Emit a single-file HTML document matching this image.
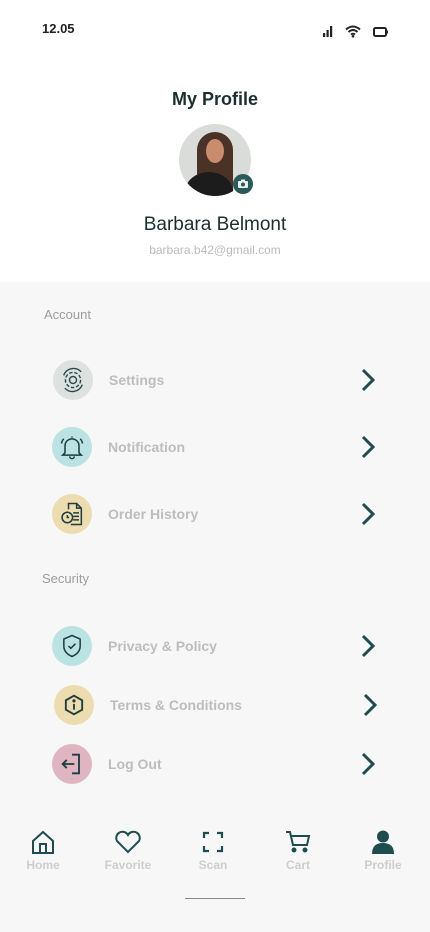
<!DOCTYPE html>
<html><head><style>
body{margin:0;width:430px;height:932px;position:relative;background:#f7f7f7;font-family:"Liberation Sans",sans-serif;overflow:hidden}
.top{position:absolute;left:0;top:0;width:430px;height:282px;background:#fff}
.a{position:absolute}
.lbl{position:absolute;font-size:13px;color:#9c9c9c}
.row{position:absolute;left:0;width:430px;height:40px}
.ic{position:absolute;width:40px;height:40px;border-radius:50%;top:0}
.ic svg{position:absolute;left:6px;top:6px}
.t{position:absolute;top:12px;font-size:14px;font-weight:bold;color:#bdbdbd}
.ch{position:absolute;top:8px}
.nav{position:absolute;top:830px;width:80px;text-align:center;font-size:12px;font-weight:bold;color:#cdcdcd}
.nav svg{display:block;margin:0 auto 4px}
</style></head><body>
<div class="top"></div>
<div class="a" style="left:42px;top:21px;font-size:13px;font-weight:bold;color:#222">12.05</div>
<svg class="a" style="left:322px;top:24px" width="66" height="16">
<rect x="1" y="9" width="2.2" height="4" fill="#222"/><rect x="4.5" y="6" width="2.2" height="7" fill="#222"/><rect x="8" y="2" width="2.2" height="11" fill="#222"/>
<path d="M24 5.5 Q31 -0.5 38 5.5 M26.5 8 Q31 4 35.5 8 M29 10.5 Q31 9 33 10.5" stroke="#222" stroke-width="2" fill="none"/><circle cx="31" cy="12.3" r="1.3" fill="#222"/>
<rect x="52" y="4" width="12" height="8" rx="1.5" stroke="#222" stroke-width="2" fill="none"/><rect x="64.5" y="6.5" width="1.8" height="3" fill="#222"/>
</svg>
<div class="a" style="left:0;width:430px;top:89px;text-align:center;font-size:18px;font-weight:bold;color:#1c2e2e">My Profile</div>
<div class="a" style="left:179px;top:124px;width:72px;height:72px;border-radius:50%;background:#d9dcd8;overflow:hidden">
<div class="a" style="left:18px;top:8px;width:36px;height:64px;border-radius:18px 18px 0 0;background:#4a3226"></div>
<div class="a" style="left:27px;top:15px;width:18px;height:24px;border-radius:50%;background:#c98d6e"></div>
<div class="a" style="left:6px;top:48px;width:48px;height:40px;border-radius:50% 50% 0 0;background:#1c1c1c"></div>
</div>
<div class="a" style="left:233px;top:174px;width:20px;height:20px;border-radius:50%;background:#2b5a5a"></div>
<svg class="a" style="left:237px;top:178px" width="12" height="12"><rect x="1" y="3" width="10" height="7" rx="1" fill="#e6eeee"/><rect x="4" y="1.5" width="4" height="2" fill="#e6eeee"/><circle cx="6" cy="6.5" r="2" fill="#2b5a5a"/></svg>
<div class="a" style="left:0;width:430px;top:214px;text-align:center;font-size:19px;color:#1c2e2e">Barbara Belmont</div>
<div class="a" style="left:0;width:430px;top:243px;text-align:center;font-size:12px;color:#bbb">barbara.b42@gmail.com</div>

<div class="lbl" style="left:44px;top:307px">Account</div>
<div class="lbl" style="left:42px;top:571px">Security</div>

<div class="row" style="top:360px"><div class="ic" style="left:53px;background:#dde1e0"><svg width="28" height="28" viewBox="0 0 24 24" fill="none" stroke="#2a4a4a" stroke-width="1.2"><circle cx="12" cy="12" r="3"/><circle cx="12" cy="12" r="6.5" stroke-dasharray="3 1.5"/><path d="M4 8 A9 9 0 0 1 19 5 M20 16 A9 9 0 0 1 5 19"/></svg></div><div class="t" style="left:109px">Settings</div>
<svg class="ch" style="left:360px" width="16" height="24"><path d="M3 2 L13 12 L3 22" stroke="#1f4d4f" stroke-width="3" fill="none"/></svg></div>

<div class="row" style="top:427px"><div class="ic" style="left:52px;background:#bce3e4"><svg width="28" height="28" viewBox="0 0 24 24" fill="none" stroke="#1f3d3d" stroke-width="1.3"><path d="M12 3 V4 M6 17 V11 A6 6 0 0 1 18 11 V17 L20 19 H4 Z M10 20 A2 2 0 0 0 14 20 M3 9 Q3.5 6 5 5 M21 9 Q20.5 6 19 5"/></svg></div><div class="t" style="left:108px">Notification</div>
<svg class="ch" style="left:360px" width="16" height="24"><path d="M3 2 L13 12 L3 22" stroke="#1f4d4f" stroke-width="3" fill="none"/></svg></div>

<div class="row" style="top:494px"><div class="ic" style="left:52px;background:#ecdcb0"><svg width="28" height="28" viewBox="0 0 24 24" fill="none" stroke="#1f3d3d" stroke-width="1.3"><path d="M9 8 V3 H16 L20 7 V21 H11 M16 3 V7 H20 M13 11 H18 M13 14 H18 M13 17 H18"/><circle cx="8" cy="15" r="4.5"/><path d="M8 13 V15 H9.5"/></svg></div><div class="t" style="left:108px">Order History</div>
<svg class="ch" style="left:360px" width="16" height="24"><path d="M3 2 L13 12 L3 22" stroke="#1f4d4f" stroke-width="3" fill="none"/></svg></div>

<div class="row" style="top:626px"><div class="ic" style="left:52px;background:#bce3e4"><svg width="28" height="28" viewBox="0 0 24 24" fill="none" stroke="#1f3d3d" stroke-width="1.3"><path d="M12 3 L19 6 V12 Q19 18 12 21 Q5 18 5 12 V6 Z M9 12 L11 14 L15 10"/></svg></div><div class="t" style="left:108px">Privacy &amp; Policy</div>
<svg class="ch" style="left:360px" width="16" height="24"><path d="M3 2 L13 12 L3 22" stroke="#1f4d4f" stroke-width="3" fill="none"/></svg></div>

<div class="row" style="top:685px"><div class="ic" style="left:54px;background:#ecdcb0"><svg width="28" height="28" viewBox="0 0 24 24" fill="none" stroke="#1f3d3d" stroke-width="1.6"><path d="M12 4 L19 8 V16 L12 20 L5 16 V8 Z M12 11 V16"/><circle cx="12" cy="8.5" r="0.6" fill="#1f3d3d"/></svg></div><div class="t" style="left:110px">Terms &amp; Conditions</div>
<svg class="ch" style="left:362px" width="16" height="24"><path d="M3 2 L13 12 L3 22" stroke="#1f4d4f" stroke-width="3" fill="none"/></svg></div>

<div class="row" style="top:744px"><div class="ic" style="left:52px;background:#e0b5c2"><svg width="28" height="28" viewBox="0 0 24 24" fill="none" stroke="#1f3d3d" stroke-width="1.6"><path d="M12 4 H18 V20 H12 M4 12 H14 M7.5 8.5 L4 12 L7.5 15.5"/></svg></div><div class="t" style="left:108px">Log Out</div>
<svg class="ch" style="left:360px" width="16" height="24"><path d="M3 2 L13 12 L3 22" stroke="#1f4d4f" stroke-width="3" fill="none"/></svg></div>

<div class="nav" style="left:3px"><svg width="24" height="24" fill="none" stroke="#1f4d4f" stroke-width="2"><path d="M2 11 L12 2 L22 11 V23 H2 Z M9 23 V14 H15 V23"/></svg>Home</div>
<div class="nav" style="left:88px"><svg width="28" height="24" fill="none" stroke="#1f4d4f" stroke-width="2"><path d="M14 22 L3 11 A5.5 5.5 0 0 1 14 5 A5.5 5.5 0 0 1 25 11 Z"/></svg>Favorite</div>
<div class="nav" style="left:173px"><svg width="24" height="24" fill="none" stroke="#1f4d4f" stroke-width="2.2"><path d="M3 8 V3 H8 M16 3 H21 V8 M21 16 V21 H16 M8 21 H3 V16"/></svg>Scan</div>
<div class="nav" style="left:258px"><svg width="26" height="24" fill="none" stroke="#1f4d4f" stroke-width="2"><path d="M1 2 H5 L8 15 H22 L24 6 H6"/><circle cx="9" cy="20" r="1.5" fill="#1f4d4f"/><circle cx="20" cy="20" r="1.5" fill="#1f4d4f"/></svg>Cart</div>
<div class="nav" style="left:343px"><svg width="24" height="24" fill="#1f4d4f"><circle cx="12" cy="6.5" r="6"/><path d="M1 24 Q1 13 12 13 Q23 13 23 24 Z"/></svg>Profile</div>
<div class="a" style="left:185px;top:898px;width:60px;height:1px;background:#888"></div>
</body></html>
